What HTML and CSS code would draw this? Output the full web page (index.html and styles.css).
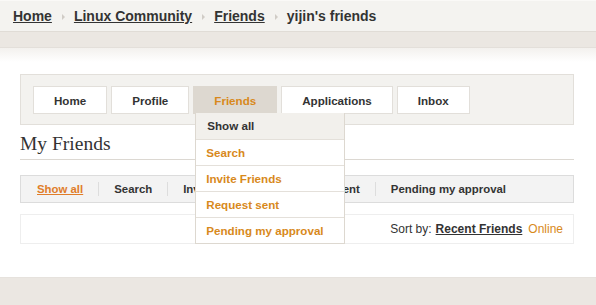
FILE: index.html
```html
<!DOCTYPE html>
<html lang="en">
<head>
    <meta charset="UTF-8">
    <title>yijin's friends</title>
    <link rel="stylesheet" href="styles.css">
</head>
<body>
    <div class="crumbs">
        <a href="#">Home</a>
        <span class="sep"></span>
        <a href="#">Linux Community</a>
        <span class="sep"></span>
        <a href="#">Friends</a>
        <span class="sep"></span>
        <span class="current">yijin's friends</span>
    </div>
    <div class="band"></div>

    <div class="main">
        <div class="nav">
            <a class="tab" href="#">Home</a>
            <a class="tab" href="#">Profile</a>
            <div class="tab active">
                Friends
                <ul class="dropdown">
                    <li class="first">Show all</li>
                    <li>Search</li>
                    <li>Invite Friends</li>
                    <li>Request sent</li>
                    <li>Pending my approval</li>
                </ul>
            </div>
            <a class="tab" href="#">Applications</a>
            <a class="tab" href="#">Inbox</a>
        </div>

        <h2 class="title">My Friends</h2>

        <div class="submenu">
            <a class="sub selected" href="#">Show all</a>
            <span class="bar"></span>
            <a class="sub" href="#">Search</a>
            <span class="bar"></span>
            <a class="sub" href="#">Invite Friends</a>
            <span class="bar"></span>
            <a class="sub" href="#">Request sent</a>
            <span class="bar"></span>
            <a class="sub" href="#">Pending my approval</a>
        </div>

        <div class="sortbox">
            Sort by: <a class="sort-on" href="#">Recent Friends</a> <a class="sort-off" href="#">Online</a>
        </div>
    </div>

    <div class="footer"></div>
</body>
</html>
```

FILE: styles.css
```css
body {
    margin: 0;
    font-family: "Liberation Sans", Arial, sans-serif;
    font-size: 12px;
    color: #333;
    background-color: #fff;
}
a {
    color: #333;
}
.crumbs {
    height: 32px;
    box-sizing: border-box;
    padding-left: 13px;
    display: flex;
    align-items: center;
    background-color: #f4f3f0;
    border-top: 1px solid #faf9f7;
    border-bottom: 1px solid #e0dcd6;
    font-size: 14px;
    font-weight: bold;
}
.crumbs a {
    color: #333;
}
.sep {
    width: 0;
    height: 0;
    margin: 2px 9px 0 10px;
    border-top: 3px solid transparent;
    border-bottom: 3px solid transparent;
    border-left: 3px solid #d0ccc6;
}
.band {
    height: 15px;
    background-color: #ebe7e2;
    border-bottom: 1px solid #e3dfda;
}
.main {
    height: 229px;
    box-sizing: border-box;
    padding: 26px 22px 0 20px;
    background: linear-gradient(#f3f1ee, #fff 14px);
}
.nav {
    display: flex;
    gap: 4px;
    padding: 11px 12px 10px 12px;
    background-color: #f3f2ef;
    border: 1px solid #e2dfda;
    font-size: 11.6px;
}
.tab {
    position: relative;
    display: block;
    height: 26px;
    line-height: 27px;
    padding: 0 20px;
    background-color: #fff;
    border: 1px solid #e2dfda;
    font-weight: bold;
    color: #333;
    text-decoration: none;
}
.tab.active {
    background-color: #ddd8d0;
    border-color: #ddd8d0;
    color: #d8891c;
}
.dropdown {
    position: absolute;
    top: 100%;
    left: 1px;
    width: 148px;
    margin: 0;
    padding: 0;
    list-style: none;
    background-color: #fff;
    border: 1px solid #ddd8d0;
    border-top: none;
    font-size: 11.6px;
    z-index: 2;
}
.dropdown li {
    height: 25px;
    line-height: 25px;
    padding-left: 10px;
    border-top: 1px solid #e4e0da;
    color: #d8891c;
}
.dropdown li.first {
    border-top: none;
    height: 26px;
    line-height: 26px;
    padding-left: 11px;
    background-color: #f2f0ec;
    color: #333;
}
.title {
    margin: 7px 0 0 0;
    padding-bottom: 3px;
    height: 24px;
    line-height: 24px;
    font-family: "Liberation Serif", Georgia, serif;
    font-size: 19.5px;
    font-weight: normal;
    color: #333;
    border-bottom: 1px solid #dcd8d2;
}
.submenu {
    margin-top: 15px;
    height: 26px;
    display: flex;
    align-items: center;
    padding-left: 16px;
    background-color: #f3f3f3;
    border: 1px solid #dcdcdc;
    font-size: 11.4px;
    font-weight: bold;
}
.sub {
    color: #333;
    text-decoration: none;
}
.sub.selected {
    color: #e07d2a;
    text-decoration: underline;
}
.bar {
    width: 1px;
    height: 14px;
    margin: 0 15px;
    background-color: #dddddd;
}
.sortbox {
    margin-top: 11px;
    height: 28px;
    display: flex;
    align-items: center;
    justify-content: flex-end;
    gap: 4px;
    padding-right: 10px;
    border: 1px solid #eeeeee;
}
.sort-on {
    font-weight: bold;
    color: #333;
}
.sort-off {
    margin-left: 2px;
    color: #d8891c;
    text-decoration: none;
}
.footer {
    height: 28px;
    background-color: #ebe7e2;
    border-top: 1px solid #e6e2dd;
}
```
